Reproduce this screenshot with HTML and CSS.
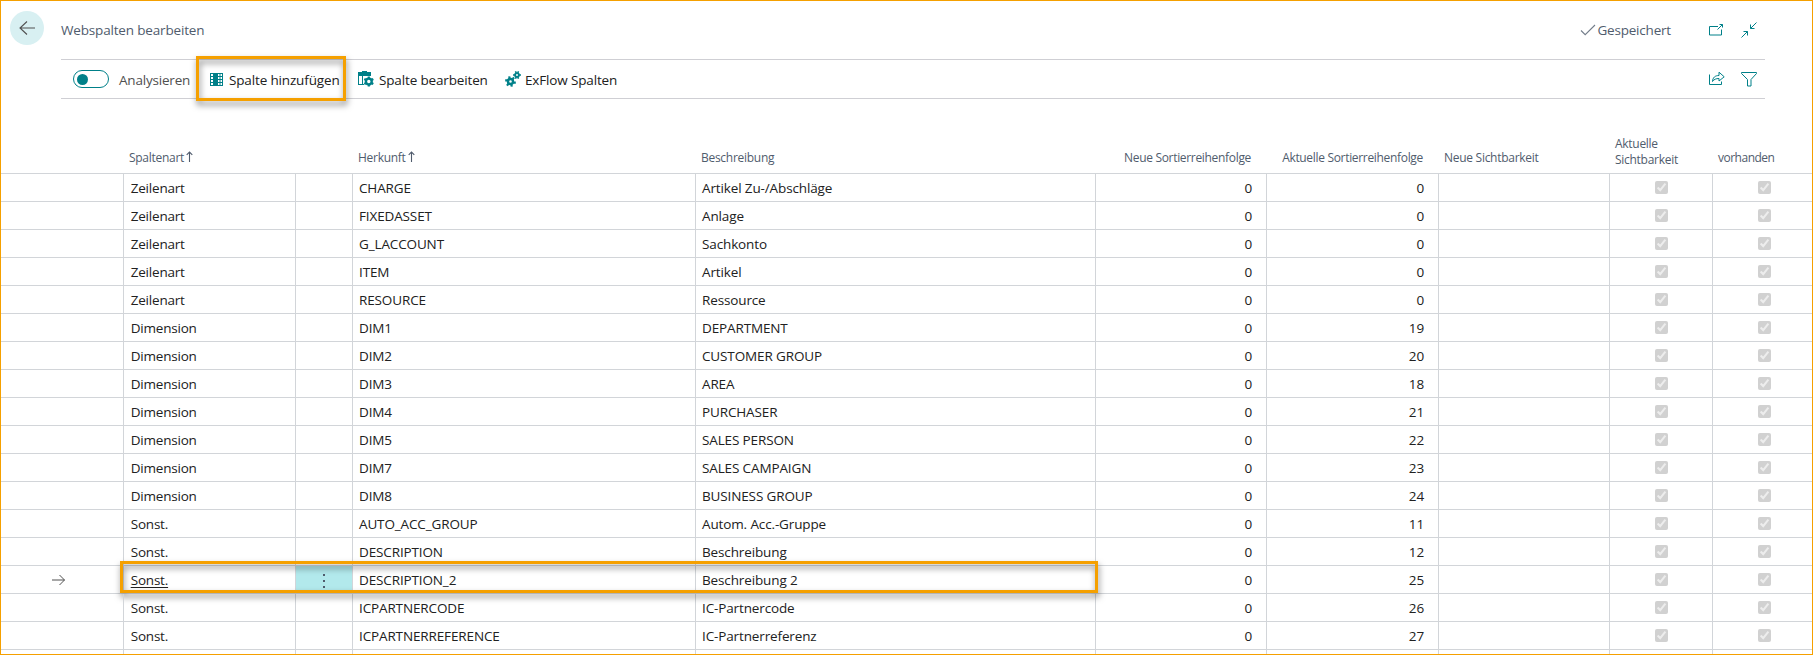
FILE: index.html
```html
<!DOCTYPE html>
<html lang="de">
<head>
<meta charset="utf-8">
<title>Webspalten bearbeiten</title>
<link rel="stylesheet" href="styles.css">
</head>
<body>
<div class="page">
  <header class="titlebar">
    <button class="back" aria-label="Zurück"><svg width="18" height="16" viewBox="0 0 18 16"><path d="M9 1.500 2 8l7 6.500M2 8h15"/></svg></button>
    <h1 class="title">Webspalten bearbeiten</h1>
    <span class="saved"><svg class="check" width="16" height="12" viewBox="0 0 16 12"><path d="M1 6.500 5.200 10.700 15 1"/></svg><span class="saved-text">Gespeichert</span></span>
    <svg class="icon popout" width="16" height="16" viewBox="0 0 16 16"><path d="M10 4.500H1.500v8.500h12V7.500M9.500 7.500l5-5M11.500 2.500h3v3"/></svg>
    <svg class="icon collapse" width="16" height="16" viewBox="0 0 16 16"><path d="M15.500.500 9.500 6.500M9.500 2.500v4h4M.500 15.500l6-6M2.500 9.500h4v4"/></svg>
  </header>
  <nav class="toolbar">
    <span class="toggle"><span class="knob"></span></span>
    <span class="label analyse">Analysieren</span>
    <span class="action add"><svg width="13" height="13" viewBox="0 0 13 13"><path fill="#008089" d="M0 0h13v13H0z"/><path fill="#fff" d="M1 1h2v2H1zM1 4h2v2H1zM1 7h2v2H1zM1 10h2v2H1zM10.500 1h1.500v2h-1.500zM10.500 4h1.500v2h-1.500zM10.500 7h1.500v2h-1.500zM10.500 10h1.500v2h-1.500zM8 1h1.500v2H8zM8 4h1.500v2H8zM8 7h1.500v2H8zM8 10h1.500v2H8z"/></svg><span class="label">Spalte hinzufügen</span></span>
    <span class="action edit"><svg width="16" height="16" viewBox="0 0 16 16"><path fill="#008089" d="M0 1h4V0h5v1h4v4H0zM0 5h1v8h5v1H0zM4 5h1v8H4z"/><circle cx="10.800" cy="10.500" r="5.500" fill="#fff"/><g fill="none" stroke="#008089"><circle cx="10.800" cy="10.500" r="2.900" stroke-width="2.400"/><path stroke-width="2.200" d="M10.800 5.400v2M10.800 13.600v2M6.300 8l1.800 1M13.500 12l1.800 1M6.300 13l1.800-1M13.500 9l1.800-1"/></g></svg><span class="label">Spalte bearbeiten</span></span>
    <span class="action gears"><svg width="16" height="16" viewBox="0 0 16 16"><g fill="none" stroke="#008089"><circle cx="5.500" cy="10.500" r="2.500" stroke-width="2.400"/><path stroke-width="2.200" d="M4.200 5.400l.5 2.400M6.800 15.600l-.5-2.400M.200 9.300h2.800M8 11.700h2.800M2 14.600l1.500-2M9 6.400l-1.500 2"/><circle cx="12" cy="4" r="1.900" stroke-width="1.900"/><path stroke-width="1.600" d="M10.500.300l.7 1.700M13.500.300l-.7 1.700M8 4h2M14 4h2M10.500 7.700l.7-1.700M13.500 7.700l-.7-1.700"/></g></svg><span class="label">ExFlow Spalten</span></span>
    <svg class="icon share" width="16" height="15" viewBox="0 0 16 15"><path d="M.500 3.500v10h12v-3M3.500 10.500c.3-4 2.500-6 6.500-6V1.200l5.200 4.600L10 10V7.500c-3 0-5 .8-6.500 3z"/></svg>
    <svg class="icon funnel" width="16" height="15" viewBox="0 0 16 15"><path d="M.500.500h15v1L10 7.500v6.500H6.500V7.500L.500 1.500z"/></svg>
    <span class="mark mark-add"></span>
  </nav>
  <table class="grid">
    <colgroup><col class="c-sel"><col class="c-kind"><col class="c-menu"><col class="c-src"><col class="c-desc"><col class="c-new"><col class="c-cur"><col class="c-newvis"><col class="c-curvis"><col class="c-avail"></colgroup>
    <thead><tr>
      <th></th>
      <th><span>Spaltenart</span><svg class="sort" width="7" height="11" viewBox="0 0 7 11"><path d="M3.500 11V1M.7 3.800 3.500 1l2.800 2.800"/></svg></th>
      <th></th>
      <th><span>Herkunft</span><svg class="sort" width="7" height="11" viewBox="0 0 7 11"><path d="M3.500 11V1M.7 3.800 3.500 1l2.800 2.800"/></svg></th>
      <th>Beschreibung</th>
      <th class="num">Neue Sortierreihenfolge</th>
      <th class="num">Aktuelle Sortierreihenfolge</th>
      <th>Neue Sichtbarkeit</th>
      <th class="two">Aktuelle<br>Sichtbarkeit</th>
      <th class="avail">vorhanden</th>
    </tr></thead>
    <tbody id="rows"></tbody>
  </table>
</div>
<script src="rows.js"></script>
</body>
</html>
```
FILE: rows.js
```js
const rows = [
  ['Zeilenart', 'CHARGE', 'Artikel Zu-/Abschläge', 0],
  ['Zeilenart', 'FIXEDASSET', 'Anlage', 0],
  ['Zeilenart', 'G_LACCOUNT', 'Sachkonto', 0],
  ['Zeilenart', 'ITEM', 'Artikel', 0],
  ['Zeilenart', 'RESOURCE', 'Ressource', 0],
  ['Dimension', 'DIM1', 'DEPARTMENT', 19],
  ['Dimension', 'DIM2', 'CUSTOMER GROUP', 20],
  ['Dimension', 'DIM3', 'AREA', 18],
  ['Dimension', 'DIM4', 'PURCHASER', 21],
  ['Dimension', 'DIM5', 'SALES PERSON', 22],
  ['Dimension', 'DIM7', 'SALES CAMPAIGN', 23],
  ['Dimension', 'DIM8', 'BUSINESS GROUP', 24],
  ['Sonst.', 'AUTO_ACC_GROUP', 'Autom. Acc.-Gruppe', 11],
  ['Sonst.', 'DESCRIPTION', 'Beschreibung', 12],
  ['Sonst.', 'DESCRIPTION_2', 'Beschreibung 2', 25, true],
  ['Sonst.', 'ICPARTNERCODE', 'IC-Partnercode', 26],
  ['Sonst.', 'ICPARTNERREFERENCE', 'IC-Partnerreferenz', 27],
];
const arrow = '<svg class="rowarrow" width="14" height="12" viewBox="0 0 14 12"><path d="M0 6h12.500M7.500 1l5 5-5 5"/></svg>';
const dots = '<svg class="dots" width="2" height="14" viewBox="0 0 2 14"><path d="M0 0h2v2H0zM0 6h2v2H0zM0 12h2v2H0z"/></svg>';
const box = '<td class="tick"><input type="checkbox" checked disabled></td>';
document.getElementById('rows').innerHTML = rows.map(([kind, src, desc, pos, active]) =>
  `<tr class="${active ? 'active' : ''}"><td class="sel">${active ? arrow + '<span class="mark mark-row"></span>' : ''}</td>` +
  `<td class="kind"><span>${kind}</span></td><td class="menu">${active ? dots : ''}</td><td>${src}</td><td>${desc}</td>` +
  `<td class="num">0</td><td class="num">${pos}</td><td></td>${box}${box}</tr>`
).join('') + '<tr class="rest">' + '<td></td>'.repeat(10) + '</tr>';
```
FILE: styles.css
```css
* { box-sizing: border-box; }
body { margin: 0; background: #fff; }
.page {
  width: 1813px;
  height: 655px;
  border: 1px solid #f5a000;
  overflow: hidden;
  font-family: "Open Sans", "Noto Sans", sans-serif;
  font-size: 13.5px;
  color: #212121;
}
svg { display: block; flex: none; }
.icon { fill: none; stroke: #008089; stroke-width: 1; }

.titlebar { display: flex; align-items: center; height: 58px; padding: 0 55px 4px 9px; color: #505c6d; }
.back { width: 34px; height: 34px; margin-right: 17px; padding: 0; border: 0; border-radius: 50%; background: #d8f0f2; display: flex; align-items: center; justify-content: center; }
.back svg { fill: none; stroke: #505050; stroke-width: 1.1; }
.title { margin: 4px auto 0 0; font-size: 13.5px; font-weight: 400; letter-spacing: -.17px; }
.saved { display: flex; align-items: center; margin: 4px 37px 0 0; letter-spacing: -.2px; }
.check { fill: none; stroke: #737d8a; stroke-width: 1.1; margin-right: 1px; }
.popout { margin-right: 17px; margin-top: 4px; }
.collapse { margin-top: 4px; }

.toolbar { position: relative; display: flex; align-items: center; height: 40px; margin: 0 47px 0 60px; border: solid #cfcfd4; border-width: 1px 0; padding: 2px 8px 0 12px; }
.toggle { width: 36px; height: 18px; margin-top: -2px; border: 1px solid #008089; border-radius: 9px; padding: 3px; }
.knob { display: block; width: 11px; height: 11px; margin-top: -.5px; border-radius: 50%; background: #008089; }
.label { letter-spacing: -.15px; white-space: nowrap; }
.analyse { width: 72px; margin: 0 19px 0 10px; color: #505050; letter-spacing: -.2px; }
.action { display: flex; align-items: center; gap: 6px; }
.action svg { margin-top: -2px; }
.add { width: 148px; }
.edit { width: 147px; gap: 5px; }
.gears { gap: 4px; }
.share { margin: -3px 16px 0 auto; }
.funnel { margin-top: -2px; }
.mark { position: absolute; border: 3px solid #f5a000; filter: drop-shadow(1px 4px 3px rgba(0, 0, 0, .5)); }
.mark-add { left: 135px; top: -4px; width: 150px; height: 45px; }

.grid { width: 1811px; table-layout: fixed; border-collapse: separate; border-spacing: 0; }
.c-sel { width: 123px; }
.c-kind, .c-cur { width: 172px; }
.c-menu { width: 57px; }
.c-src { width: 343px; }
.c-desc { width: 400px; }
.c-new, .c-newvis { width: 171px; }
.c-curvis { width: 103px; }
.c-avail { width: 99px; }
.grid th { height: 75px; padding: 0 0 5px 5px; border-bottom: 1px solid #d2d5d9; vertical-align: bottom; text-align: left; font-size: 12px; line-height: 20px; font-weight: 400; color: #505c6d; white-space: nowrap; letter-spacing: -.28px; }
.grid th.num { text-align: right; padding-right: 16px; letter-spacing: -.32px; }
.grid th.two { line-height: 16px; }
.grid th.avail { letter-spacing: -.5px; }
.sort { display: inline-block; margin-left: 2px; fill: none; stroke: #505c6d; stroke-width: 1.1; }
.grid td { height: 28px; padding: 1px 0 0 6px; line-height: 20px; border: solid #d2d5d9; border-width: 0 1px 1px 0; letter-spacing: -.13px; white-space: nowrap; }
.grid td:last-child { border-right: 0; }
.grid td.kind { padding-left: 6.7px; letter-spacing: -.2px; }
.grid td.num { text-align: right; padding-right: 14px; }
.grid td.tick { padding: 0; }
.tick input { display: block; width: 13px; height: 13px; margin: 0 0 0 45px; }
.grid td.sel { position: relative; padding: 0 0 0 51px; }
.rowarrow { fill: none; stroke: #505050; stroke-width: 1; }
.mark-row { left: 119px; top: -5px; width: 978px; height: 32px; }
.active .kind span { text-decoration: underline; text-underline-offset: 2px; }
.grid .active .menu { background: #b2e9ec; padding: 3px 0 0 27px; }
.dots { fill: #505c6d; }
.grid .rest td { height: 4px; padding: 0; border-bottom: 0; line-height: 0; }
```
